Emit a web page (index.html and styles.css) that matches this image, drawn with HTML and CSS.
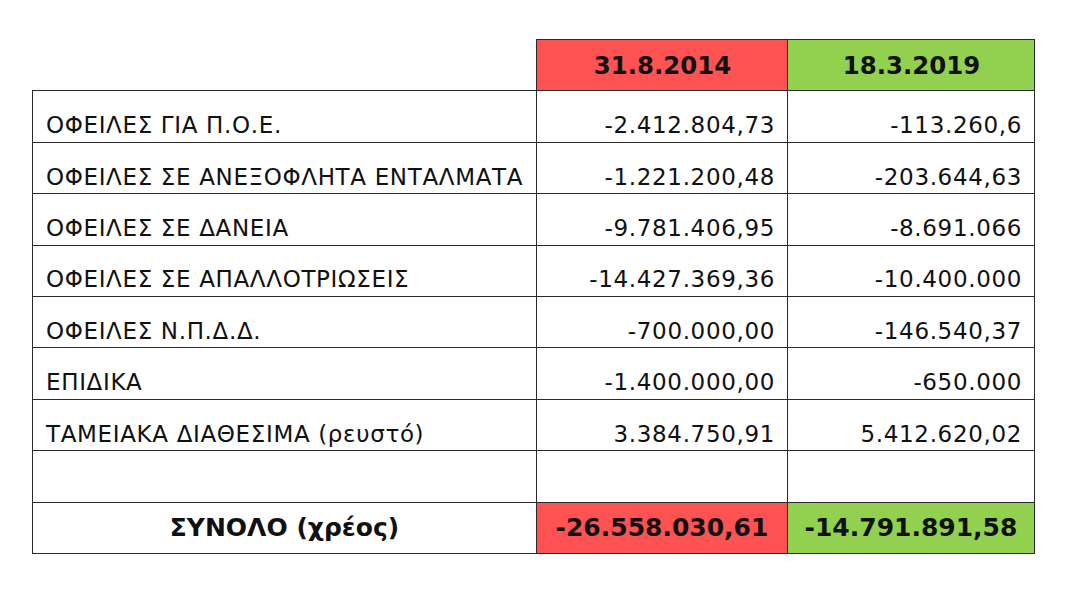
FILE: index.html
```html
<!DOCTYPE html>
<html lang="el">
<head>
<meta charset="utf-8">
<title>Οφειλές</title>
<link rel="stylesheet" href="styles.css">
</head>
<body>
<table class="debt">
  <colgroup>
    <col class="c-label">
    <col class="c-a">
    <col class="c-b">
  </colgroup>
  <thead>
    <tr>
      <th class="blank"></th>
      <th class="red">31.8.2014</th>
      <th class="green">18.3.2019</th>
    </tr>
  </thead>
  <tbody>
    <tr><td class="label">ΟΦΕΙΛΕΣ ΓΙΑ Π.Ο.Ε.</td><td class="num">-2.412.804,73</td><td class="num">-113.260,6</td></tr>
    <tr><td class="label">ΟΦΕΙΛΕΣ ΣΕ ΑΝΕΞΟΦΛΗΤΑ ΕΝΤΑΛΜΑΤΑ</td><td class="num">-1.221.200,48</td><td class="num">-203.644,63</td></tr>
    <tr><td class="label">ΟΦΕΙΛΕΣ ΣΕ ΔΑΝΕΙΑ</td><td class="num">-9.781.406,95</td><td class="num">-8.691.066</td></tr>
    <tr><td class="label">ΟΦΕΙΛΕΣ ΣΕ ΑΠΑΛΛΟΤΡΙΩΣΕΙΣ</td><td class="num">-14.427.369,36</td><td class="num">-10.400.000</td></tr>
    <tr><td class="label">ΟΦΕΙΛΕΣ Ν.Π.Δ.Δ.</td><td class="num">-700.000,00</td><td class="num">-146.540,37</td></tr>
    <tr><td class="label">ΕΠΙΔΙΚΑ</td><td class="num">-1.400.000,00</td><td class="num">-650.000</td></tr>
    <tr><td class="label">ΤΑΜΕΙΑΚΑ ΔΙΑΘΕΣΙΜΑ (ρευστό)</td><td class="num">3.384.750,91</td><td class="num">5.412.620,02</td></tr>
    <tr><td class="label"></td><td class="num"></td><td class="num"></td></tr>
    <tr class="total"><td class="total-label">ΣΥΝΟΛΟ (χρέος)</td><td class="total-num red">-26.558.030,61</td><td class="total-num green">-14.791.891,58</td></tr>
  </tbody>
</table>
</body>
</html>
```
FILE: styles.css
```css
html, body {
  margin: 0;
  padding: 0;
  background: #ffffff;
}

body {
  padding: 39px 0 0 32px;
  font-family: "DejaVu Sans", "Noto Sans", sans-serif;
  color: #111111;
}

.debt {
  border-collapse: collapse;
  table-layout: fixed;
  width: 1002px;
  font-size: 23px;
}

.c-label { width: 504px; }
.c-a { width: 251px; }
.c-b { width: 247px; }

.debt th,
.debt td {
  border: 1px solid #2a2a2a;
  height: 51.4px;
  padding: 0 12px 2px 13px;
  line-height: 1.2;
  letter-spacing: 0.65px;
  white-space: nowrap;
  box-sizing: border-box;
}

.debt th {
  font-weight: bold;
  text-align: center;
  vertical-align: middle;
  padding-bottom: 0;
  font-size: 24.4px;
  letter-spacing: 0;
}

.debt th.blank {
  border-top: 0;
  border-left: 0;
  background: #ffffff;
}

.label {
  text-align: left;
  vertical-align: bottom;
}

.num {
  text-align: right;
  vertical-align: bottom;
}

.total-label,
.total-num {
  text-align: center;
  vertical-align: middle;
  font-weight: bold;
}

.debt .total-label,
.debt .total-num {
  padding: 0 8px;
  font-size: 25px;
  letter-spacing: 0;
}

.red { background: #ff5252; }
.green { background: #92d050; }
```
